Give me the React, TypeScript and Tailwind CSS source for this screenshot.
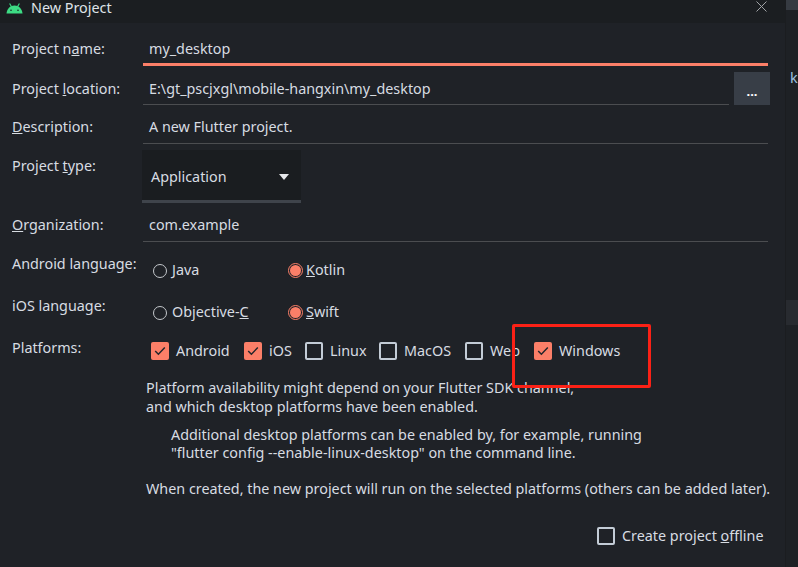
import type { ReactNode } from "react"

const accent = "bg-[#fb7f68]"

function AndroidLogo() {
  return (
    <svg width="17" height="11" viewBox="0 0 17 11" className="ml-[6px] mr-[8px]">
      <path d="M0.5 10.5 C1 6 4 2.5 8.5 2.5 C13 2.5 16 6 16.5 10.5 Z" fill="#3ddc84" />
      <path d="M3.6 0.4 L5.4 3.6 M13.4 0.4 L11.6 3.6" stroke="#3ddc84" strokeWidth="1.1" />
      <circle cx="5" cy="7.3" r="0.8" fill="#1b1e21" />
      <circle cx="12" cy="7.3" r="0.8" fill="#1b1e21" />
    </svg>
  )
}

function Radio({ label, checked, className }: { label: ReactNode; checked?: boolean; className: string }) {
  return (
    <div className={`flex items-center ${className}`}>
      {checked ? (
        <div className="mr-[3px] flex h-[15px] w-[15px] items-center justify-center rounded-full border border-[#fb7f68]">
          <div className={`h-[11px] w-[11px] rounded-full ${accent}`} />
        </div>
      ) : (
        <div className="mr-[5px] mt-[1px] h-[14px] w-[14px] rounded-full border border-[#c4c8cc]" />
      )}
      <span>{label}</span>
    </div>
  )
}

function Check({ label, checked, className }: { label: ReactNode; checked?: boolean; className?: string }) {
  return (
    <div className={`flex items-center ${className ?? ""}`}>
      {checked ? (
        <div className={`mr-[7px] flex h-[18px] w-[18px] items-center justify-center rounded-[2px] ${accent}`}>
          <svg width="12" height="10" viewBox="0 0 12 10" fill="none">
            <path d="M1.2 5 L4.4 8.2 L10.8 1.6" stroke="#23262b" strokeWidth="1.5" />
          </svg>
        </div>
      ) : (
        <div className="mr-[7px] h-[18px] w-[18px] rounded-[2px] border-2 border-[#c3ccd6]" />
      )}
      <span>{label}</span>
    </div>
  )
}

export default function App() {
  return (
    <div className="relative flex h-[567px] w-[798px] overflow-hidden bg-[#1f2227] font-['Noto_Sans',sans-serif] text-[14.35px] leading-[20px] text-[#d7dce2]">
      <div className="flex w-[785px] flex-col">
        <div className="flex h-[23px] items-start justify-between bg-[#1b1e21]">
          <div className="flex h-[16px] items-center leading-[16px] text-[#dfe3e8]">
            <AndroidLogo />
            <span>New Project</span>
          </div>
          <svg width="11" height="11" viewBox="0 0 11 11" className="mr-[18px] mt-[1px]">
            <path d="M0.5 0.5 L10.5 10.5 M10.5 0.5 L0.5 10.5" stroke="#a0a3a6" strokeWidth="1" />
          </svg>
        </div>

        <div className="flex pt-[16px]">
          <div className="w-[143px] pl-[12px]">Project n<u>a</u>me:</div>
          <div className="pl-[6px]">my_desktop</div>
        </div>
        <div className="ml-[143px] mt-[4px] h-[3px] w-[625px] bg-[#fb7f68]" />

        <div className="mt-[6px] flex">
          <div className="w-[131px] pl-[12px] pt-[7px]">Project <u>l</u>ocation:</div>
          <div className="ml-[12px] h-[33px] w-[586px] border-b border-[#4b4d50] pl-[6px] pt-[7px]">
            E:\gt_pscjxgl\mobile-hangxin\my_desktop
          </div>
          <div className="ml-[5px] flex h-[33px] w-[36px] items-center justify-center bg-[#383e47] pt-[5px] text-[13px] font-bold text-white">
            ...
          </div>
        </div>

        <div className="mt-[6px] flex">
          <div className="w-[131px] pl-[12px] pt-[6px]"><u>D</u>escription:</div>
          <div className="ml-[12px] h-[33px] w-[625px] border-b border-[#4b4d50] pl-[6px] pt-[6px]">
            A new Flutter project.
          </div>
        </div>

        <div className="mt-[6px] flex">
          <div className="w-[142px] pl-[12px] pt-[6px]">Project <u>t</u>ype:</div>
          <div className="flex h-[53px] w-[159px] items-center justify-between border-b-[3px] border-[#3f444b] bg-[#1a1d20] pl-[9px] pr-[12px] pt-[3px]">
            <span>Application</span>
            <div className="h-0 w-0 border-x-[5px] border-t-[6px] border-x-transparent border-t-[#e6e8ea]" />
          </div>
        </div>

        <div className="mt-[12px] flex">
          <div className="w-[131px] pl-[12px]"><u>O</u>rganization:</div>
          <div className="ml-[12px] h-[27px] w-[625px] border-b border-[#4b4d50] pl-[6px]">com.example</div>
        </div>

        <div className="mt-[12px] flex">
          <div className="w-[153px] pl-[12px]">Android language:</div>
          <Radio label={<><u>J</u>ava</>} className="mt-[6px] h-[20px] w-[135px]" />
          <Radio label={<><u>K</u>otlin</>} checked className="mt-[6px] h-[20px]" />
        </div>

        <div className="mt-[15px] flex">
          <div className="w-[153px] pl-[12px] pt-[1px]">iOS language:</div>
          <Radio label={<>Objective-<u>C</u></>} className="mt-[7px] h-[20px] w-[135px]" />
          <Radio label={<><u>S</u>wift</>} checked className="mt-[7px] h-[20px]" />
        </div>

        <div className="mt-[15px] flex">
          <div className="w-[151px] pl-[12px] pt-[1px]">Platforms:</div>
          <div className="mt-[4px] flex h-[20px]">
            <Check label="Android" checked className="w-[93px]" />
            <Check label="iOS" checked className="w-[61px]" />
            <Check label="Linux" className="w-[74px]" />
            <Check label="MacOS" className="w-[86px]" />
            <Check label="Web" className="w-[69px]" />
            <Check label="Windows" checked />
          </div>
        </div>

        <div className="ml-[146px] mt-[17px] leading-[19px]">
          <p>Platform availability might depend on your Flutter SDK channel,</p>
          <p>and which desktop platforms have been enabled.</p>
        </div>
        <div className="ml-[171px] mt-[10px] leading-[18px]">
          <p>Additional desktop platforms can be enabled by, for example, running</p>
          <p>"flutter config --enable-linux-desktop" on the command line.</p>
        </div>
        <p className="ml-[146px] mt-[17px]">When created, the new project will run on the selected platforms (others can be added later).</p>

        <Check label={<>Create project <u>o</u>ffline</>} className="ml-[597px] mt-[27px]" />
      </div>

      <div className="flex w-[13px] flex-col border-l border-[#1b1d20] bg-[#1e2125]">
        <div className="h-[10px] bg-[#363b42]" />
        <div className="mt-[58px] pl-[4px] text-[#9fc3e0]">k</div>
        <div className="mt-[212px] h-[25px] bg-[#282b30]" />
      </div>

      {/* annotation drawn over the dialog */}
      <div className="absolute left-[512px] top-[324px] h-[64px] w-[139px] rounded-[2px] border-[3px] border-[#fb2116]" />
    </div>
  )
}
